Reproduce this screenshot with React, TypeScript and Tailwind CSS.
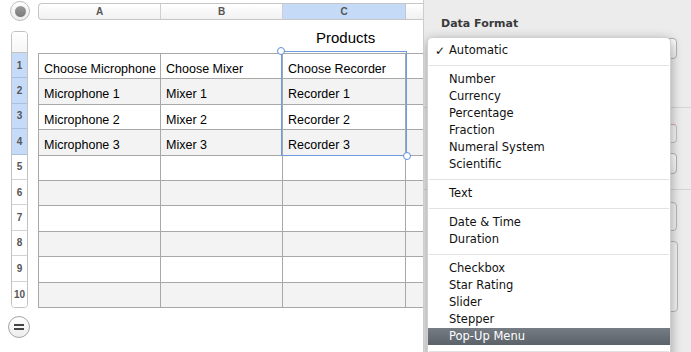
import React from "react";

const rows = [
  ["Choose Microphone", "Choose Mixer", "Choose Recorder"],
  ["Microphone 1", "Mixer 1", "Recorder 1"],
  ["Microphone 2", "Mixer 2", "Recorder 2"],
  ["Microphone 3", "Mixer 3", "Recorder 3"],
  ["", "", ""],
  ["", "", ""],
  ["", "", ""],
  ["", "", ""],
  ["", "", ""],
  ["", "", ""],
];

type Item = { label: string; sep?: boolean; check?: boolean; active?: boolean };
const menu: Item[] = [
  { label: "Automatic", check: true },
  { label: "", sep: true },
  { label: "Number" },
  { label: "Currency" },
  { label: "Percentage" },
  { label: "Fraction" },
  { label: "Numeral System" },
  { label: "Scientific" },
  { label: "", sep: true },
  { label: "Text" },
  { label: "", sep: true },
  { label: "Date & Time" },
  { label: "Duration" },
  { label: "", sep: true },
  { label: "Checkbox" },
  { label: "Star Rating" },
  { label: "Slider" },
  { label: "Stepper" },
  { label: "Pop-Up Menu", active: true },
  { label: "", sep: true },
];

function Canvas() {
  return (
    <div
      className="relative w-[424px] h-[352px] shrink-0 bg-white overflow-hidden border-r border-[#cdcdcd]"
      style={{ fontFamily: '"Liberation Sans", Arial, sans-serif' }}
    >
      {/* top row: circle + column header */}
      <div className="flex items-start pt-[1px]">
        <div className="ml-[10px] w-[20px] h-[20px] rounded-full border border-[#bdbdbd] bg-gradient-to-b from-white to-[#ececec] flex items-center justify-center shrink-0">
          <div className="w-[11px] h-[11px] rounded-full bg-gradient-to-b from-[#9a9a9a] to-[#7c7c7c]" />
        </div>
        <div className="ml-[8px] mt-[2px] flex h-[17px] shrink-0 rounded-l-[4px] border border-r-0 border-[#c6c6c6] bg-gradient-to-b from-white to-[#f1f1f1] text-[10px] font-bold text-[#555] overflow-hidden">
          <div className="w-[122px] border-r border-[#cfcfcf] flex items-center justify-center">A</div>
          <div className="w-[122px] border-r border-[#cfcfcf] flex items-center justify-center">B</div>
          <div className="w-[123px] border-r border-[#c6c6c6] bg-[#c5daf6] flex items-center justify-center">C</div>
          <div className="w-[60px]" />
        </div>
      </div>

      {/* body */}
      <div className="flex mt-[10px]">
        {/* row headers */}
        <div className="ml-[11px] w-[17px] shrink-0 flex flex-col border border-[#c3c3c3] rounded-[4px] overflow-hidden text-[10px] font-bold text-[#555]">
          <div className="h-[21px] bg-gradient-to-b from-white to-[#f6f6f6] border-b border-[#c3c3c3]" />
          {rows.map((_, i) => (
            <div
              key={i}
              className={
                "h-[25.4px] flex items-center justify-center " +
                (i < 4
                  ? "bg-[#c6dbf7] border-b border-[#a9c1e0]"
                  : i === 9
                  ? "bg-white"
                  : "bg-white border-b border-[#d2d2d2]")
              }
            >
              {i + 1}
            </div>
          ))}
        </div>

        {/* table */}
        <div className="ml-[10px] flex flex-col shrink-0">
          <div className="h-[22px] pl-[278px] text-[15px] leading-[14px] text-black whitespace-nowrap">
            Products
          </div>
          <div className="flex flex-col border-t border-[#a8a8a8]">
            {rows.map((r, i) => (
              <div
                key={i}
                className={
                  "flex h-[25.4px] text-[12.5px] leading-[16px] text-black " +
                  (i % 2 === 1 ? "bg-[#f3f3f3]" : "bg-white")
                }
              >
                <div className="w-[123px] border-l border-r border-b border-[#a8a8a8] pl-[5px] pt-[7px] whitespace-nowrap">
                  {r[0]}
                </div>
                <div className="w-[122px] border-r border-b border-[#a8a8a8] pl-[5px] pt-[7px] whitespace-nowrap">
                  {r[1]}
                </div>
                <div className="w-[123px] border-r border-b border-[#a8a8a8] pl-[5px] pt-[7px] whitespace-nowrap">
                  {r[2]}
                </div>
                <div className="w-[60px] border-b border-[#a8a8a8]" />
              </div>
            ))}
          </div>
        </div>
      </div>

      {/* bottom = button */}
      <div className="ml-[8px] mt-[8px] w-[22px] h-[22px] rounded-full border border-[#a5a5a5] bg-gradient-to-b from-white to-[#ededed] flex flex-col items-center justify-center gap-[2px]">
        <div className="w-[10px] h-[2px] bg-[#444]" />
        <div className="w-[10px] h-[2px] bg-[#444]" />
      </div>

      {/* selection overlay */}
      <div className="absolute left-[281px] top-[51px] w-[126px] h-[105px] border border-[#6b9be0] pointer-events-none" />
      <div className="absolute left-[277px] top-[47px] w-[8px] h-[8px] rounded-full border border-[#5d8fd8] bg-white" />
      <div className="absolute left-[403px] top-[152px] w-[8px] h-[8px] rounded-full border border-[#5d8fd8] bg-white" />
    </div>
  );
}

function Sidebar() {
  return (
    <div
      className="relative w-[267px] h-[352px] shrink-0 bg-[#ececec] overflow-hidden"
      style={{ fontFamily: '"DejaVu Sans", Verdana, sans-serif' }}
    >
      <div className="pt-[17px] pl-[17px] text-[11px] leading-[13px] font-bold text-[#3a3a3a]">Data Format</div>
      <div className="ml-[17px] mt-[8px] w-[236px] h-[21px] rounded-[4px] border border-[#b3b3b3] bg-gradient-to-b from-white to-[#f0f0f0]" />
      <div className="mt-[48px] border-t border-[#d4d4d4]" />
      <div className="ml-[188px] mt-[16px] w-[65px] h-[19px] rounded-[4px] border border-[#c2c2c2] bg-[#f4f4f4] border-t-[#e8a0a0]" />
      <div className="ml-[17px] mt-[10px] w-[236px] h-[21px] rounded-[4px] border border-[#b3b3b3] bg-gradient-to-b from-white to-[#f0f0f0]" />
      <div className="mt-[15px] border-t border-[#d4d4d4]" />
      <div className="ml-[188px] mt-[12px] w-[65px] h-[29px] rounded-[4px] border border-[#b8b8b8] bg-[#f2f2f2]" />
      <div className="ml-[100px] mt-[10px] w-[154px] h-[71px] rounded-[4px] border border-[#b8b8b8] bg-[#f2f2f2]" />

      {/* popup menu */}
      <div className="absolute left-[3px] top-[37px] w-[244px] h-[330px] bg-white rounded-[5px] shadow-[0_3px_12px_rgba(0,0,0,0.35)] border border-[#d0d0d0] pt-[4px] text-[11.5px] text-[#111]">
        {menu.map((m, i) =>
          m.sep ? (
            <div key={i} className="h-[12px] flex items-center px-[1px]">
              <div className="w-full h-px bg-[#e2e2e2]" />
            </div>
          ) : (
            <div
              key={i}
              className={
                "h-[17px] flex items-center relative whitespace-nowrap " +
                (m.active ? "bg-gradient-to-b from-[#757c84] to-[#5b6269] text-white" : "")
              }
            >
              {m.check && <span className="absolute left-[7px] text-[12px] font-bold">✓</span>}
              <span className="pl-[21px]">{m.label}</span>
            </div>
          )
        )}
      </div>
    </div>
  );
}

export default function App() {
  return (
    <div className="flex w-[691px] h-[352px] overflow-hidden bg-white">
      <Canvas />
      <Sidebar />
    </div>
  );
}
